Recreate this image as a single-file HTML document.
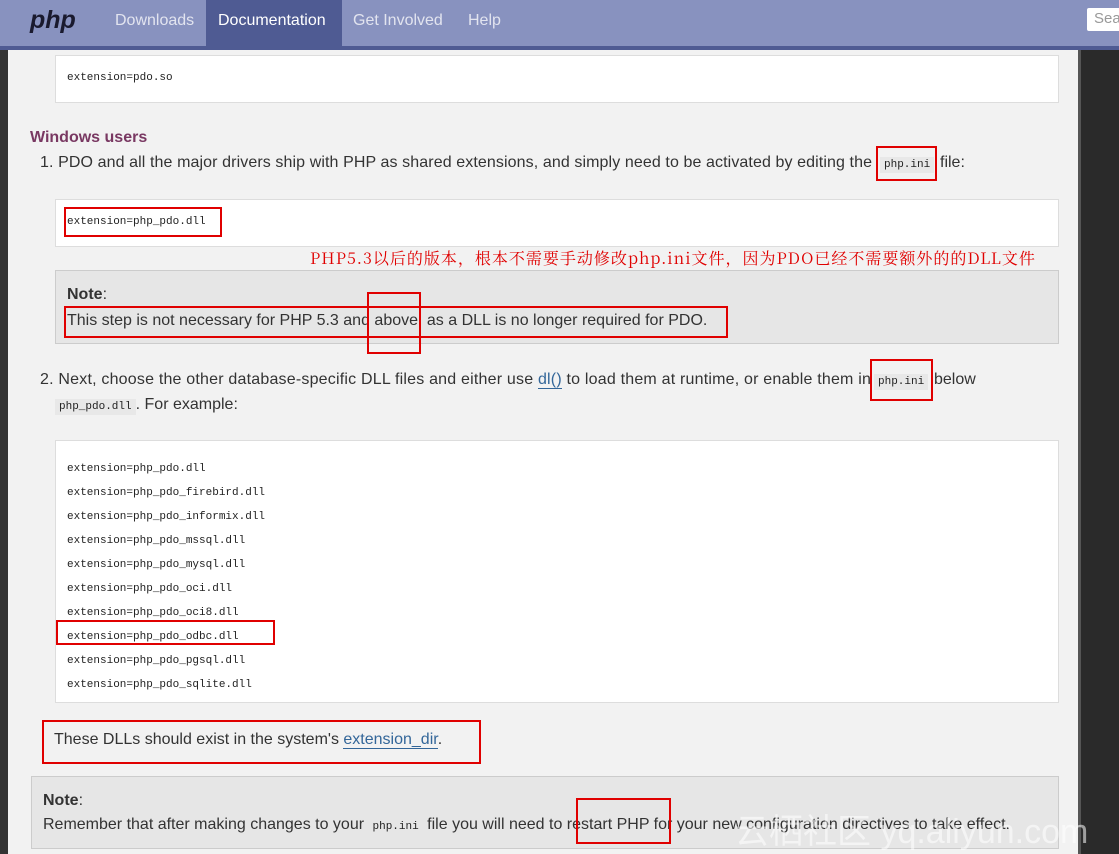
<!DOCTYPE html>
<html><head><meta charset="utf-8"><style>
*{margin:0;padding:0;box-sizing:border-box}
body{width:1119px;height:854px;overflow:hidden;background:#f2f2f2;font-family:"Liberation Sans",sans-serif;color:#333;font-size:16px;position:relative}
.a{position:absolute;white-space:nowrap}
.l{left:0;top:0;width:8px;height:854px;background:#333}
.r{left:1078px;top:46px;width:41px;height:808px;background:#2a2a2a;border-left:3px solid #555}
.hd{left:0;top:0;width:1119px;background:#8892bf;border-bottom:4px solid #4f5b93;height:50px}
.nav{top:12px;font-size:16px;color:#e2e4ef}
.box{background:#fff;border:1px solid #ddd}
.mono{font-family:"Liberation Mono",monospace;font-size:11px;color:#222}
.code{font-family:"Liberation Mono",monospace;font-size:11px;background:#e8e8e8;padding:2px 4px;color:#222}
.note{background:#e6e6e6;border:1px solid #ccc}
.red{border:2px solid #e00000}
a{color:#369;text-decoration:none;border-bottom:1px solid #369}
</style></head><body>
<div class="a l"></div>
<div class="a r"></div>
<div class="a hd"></div>
<div class="a" style="left:206px;top:0;width:136px;height:46px;background:#4f5b93"></div>
<div class="a" style="left:30px;top:6px;font-size:25px;font-weight:bold;font-style:italic;color:#1a1a2e">php</div>
<div class="a nav" style="left:115px">Downloads</div>
<div class="a nav" style="left:218px;color:#fff">Documentation</div>
<div class="a nav" style="left:353px">Get Involved</div>
<div class="a nav" style="left:468px">Help</div>
<div class="a" style="left:1087px;top:8px;width:40px;height:23px;background:#fff;border-radius:2px;color:#999;font-size:15px;padding:2px 0 0 7px">Sea</div>

<div class="a box" style="left:55px;top:55px;width:1004px;height:48px"></div>
<div class="a mono" style="left:67px;top:72px">extension=pdo.so</div>

<div class="a" style="left:30px;top:129px;font-size:16px;font-weight:bold;color:#793862">Windows users</div>
<div class="a" style="left:40px;top:154px;letter-spacing:0.1px">1. PDO and all the major drivers ship with PHP as shared extensions, and simply need to be activated by editing the</div>
<div class="a code" style="left:880px;top:157px">php.ini</div>
<div class="a" style="left:940px;top:154px">file:</div>
<div class="a red" style="left:876px;top:146px;width:61px;height:35px"></div>

<div class="a box" style="left:55px;top:199px;width:1004px;height:48px"></div>
<div class="a mono" style="left:67px;top:216px">extension=php_pdo.dll</div>
<div class="a red" style="left:64px;top:207px;width:158px;height:30px"></div>
<div class="a" style="left:310px;top:246px;color:#e00000;font-family:'Noto Serif CJK SC',serif;font-size:16px;letter-spacing:1px">PHP5.3以后的版本，根本不需要手动修改php.ini文件，因为PDO已经不需要额外的的DLL文件</div>

<div class="a note" style="left:55px;top:270px;width:1004px;height:74px"></div>
<div class="a" style="left:67px;top:286px;font-weight:bold;font-size:16px">Note<span style="font-weight:normal">:</span></div>
<div class="a" style="left:67px;top:312px">This step is not necessary for PHP 5.3 and above, as a DLL is no longer required for PDO.</div>
<div class="a red" style="left:64px;top:306px;width:664px;height:32px"></div>
<div class="a red" style="left:367px;top:292px;width:54px;height:62px"></div>

<div class="a" style="left:40px;top:371px;letter-spacing:0.2px">2. Next, choose the other database-specific DLL files and either use <a>dl()</a> to load them at runtime, or enable them in</div>
<div class="a code" style="left:874px;top:374px">php.ini</div>
<div class="a" style="left:934px;top:371px">below</div>
<div class="a red" style="left:870px;top:359px;width:63px;height:42px"></div>
<div class="a" style="left:55px;top:396px"><span class="code">php_pdo.dll</span>. For example:</div>

<div class="a box" style="left:55px;top:440px;width:1004px;height:263px"></div>
<div class="a mono" style="left:67px;top:457px;line-height:24px">extension=php_pdo.dll<br>extension=php_pdo_firebird.dll<br>extension=php_pdo_informix.dll<br>extension=php_pdo_mssql.dll<br>extension=php_pdo_mysql.dll<br>extension=php_pdo_oci.dll<br>extension=php_pdo_oci8.dll<br>extension=php_pdo_odbc.dll<br>extension=php_pdo_pgsql.dll<br>extension=php_pdo_sqlite.dll</div>
<div class="a red" style="left:56px;top:620px;width:219px;height:25px"></div>

<div class="a" style="left:54px;top:731px">These DLLs should exist in the system's <a>extension_dir</a>.</div>
<div class="a red" style="left:42px;top:720px;width:439px;height:44px"></div>

<div class="a note" style="left:31px;top:776px;width:1028px;height:73px"></div>
<div class="a" style="left:43px;top:792px;font-weight:bold;font-size:16px">Note<span style="font-weight:normal">:</span></div>
<div class="a" style="left:43px;top:816px">Remember that after making changes to your <span class="code" style="background:none">php.ini</span> file you will need to restart PHP for your new configuration directives to take effect.</div>
<div class="a red" style="left:576px;top:798px;width:95px;height:46px"></div>
<div class="a" style="left:735px;top:804px;font-size:34px;color:rgba(255,255,255,.55);font-family:'Liberation Sans','Noto Sans CJK SC',sans-serif">云栖社区 yq.aliyun.com</div>
</body></html>
